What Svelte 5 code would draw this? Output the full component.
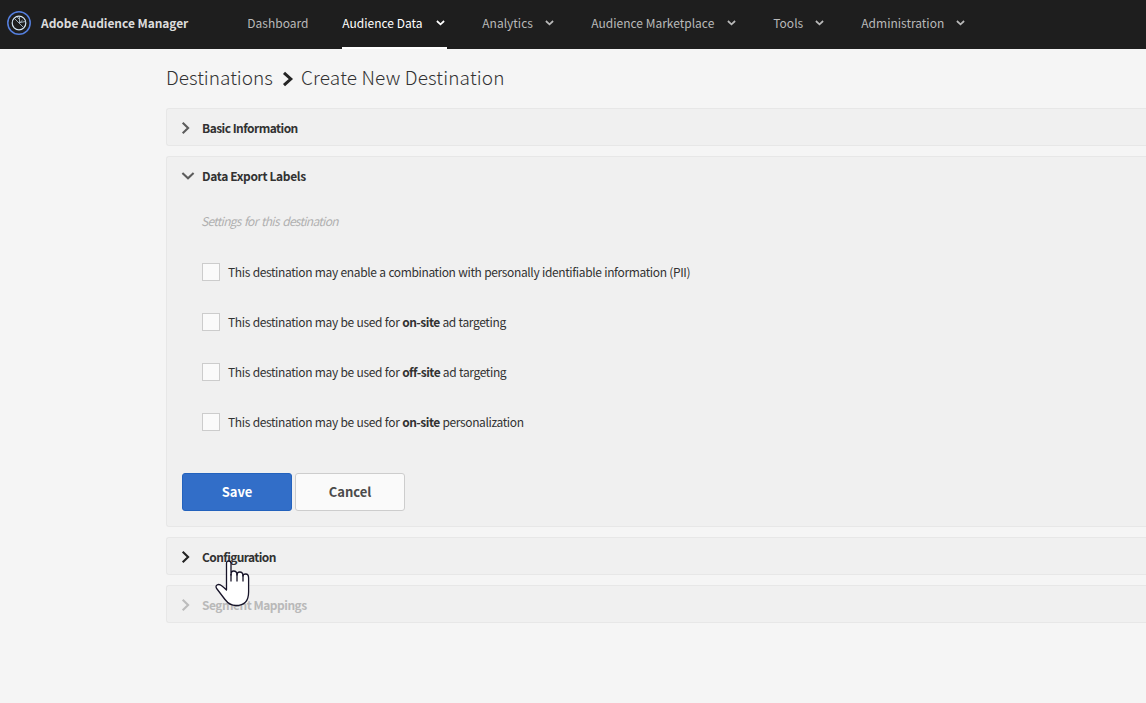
<script>
  const nav = [
    { label: 'Dashboard', width: 60, menu: false },
    { label: 'Audience Data', width: 81, menu: true, active: true },
    { label: 'Analytics', width: 50, menu: true },
    { label: 'Audience Marketplace', width: 123, menu: true },
    { label: 'Tools', width: 29, menu: true },
    { label: 'Administration', width: 82, menu: true }
  ];
  const options = [
    { before: 'This destination may enable a combination with personally identifiable information (PII)', bold: '', after: '' },
    { before: 'This destination may be used for ', bold: 'on-site', after: ' ad targeting' },
    { before: 'This destination may be used for ', bold: 'off-site', after: ' ad targeting' },
    { before: 'This destination may be used for ', bold: 'on-site', after: ' personalization' }
  ];
</script>

{#snippet chevron()}
  <svg class="chevron" width="10" height="14" viewBox="0 0 10 14"><path d="M1.7 1.7 7.1 7 1.7 12.3" /></svg>
{/snippet}

<div class="page">
  <header>
    <svg class="logo" width="24" height="24" viewBox="0 0 24 24" fill="none">
      <circle cx="12" cy="12" r="11.2" stroke="#5580e0" stroke-width="1.5" />
      <circle cx="12" cy="12" r="6.8" stroke="#d5e7f5" stroke-width="1.2" />
      <path d="M7.3 7.3 16.5 16.5M12.5 12V5.5M12.5 12 15.5 9.2M13 11.5 18.5 10.5M10 5.5 12 8" stroke="#bdcfdd" stroke-width=".8" />
    </svg>
    <span class="brand">Adobe Audience Manager</span>
    <nav>
      {#each nav as item}
        <a class:active={item.active} class:menu={item.menu}>
          <span class="label" style:width="{item.width}px">{item.label}</span>
          {#if item.menu}
            <svg width="9" height="6" viewBox="0 0 9 6"><path d="M.9 1 4.5 4.3 8.1 1" /></svg>
          {/if}
        </a>
      {/each}
    </nav>
  </header>

  <main>
    <h1>
      <span class="crumb">Destinations</span>
      <svg width="12" height="16" viewBox="0 0 12 16"><path d="M2 1.8 8.8 8 2 14.2" /></svg>
      <span class="current">Create New Destination</span>
    </h1>

    <section>
      <h2>{@render chevron()}<span class="basic">Basic Information</span></h2>
    </section>

    <section class="open">
      <h2>
        <svg class="chevron down" width="14" height="10" viewBox="0 0 14 10"><path d="M1.4 2 7 7.2 12.6 2" /></svg>
        <span class="labels">Data Export Labels</span>
      </h2>
      <p class="hint">Settings for this destination</p>
      <div class="options">
        {#each options as o}
          <label><i></i><span>{o.before}{#if o.bold}<b>{o.bold}</b>{/if}{o.after}</span></label>
        {/each}
      </div>
      <div class="buttons">
        <button class="primary">Save</button>
        <button>Cancel</button>
      </div>
    </section>

    <section class="hovered">
      <h2>{@render chevron()}<span class="config">Configuration</span></h2>
      <svg class="pointer" width="36" height="48" viewBox="0 0 36 48">
        <path d="M11.5 30V3.5Q11.5 1 13.7 1 16 1 16 3.5V15Q16 11 18.6 11 22 11 22 15 22 12 24.8 12 28 12 28 16 28 14 30.8 14 33.6 14 33.6 18V32Q33.6 45.5 21 45.5 14.5 45.5 10 39.5L2 29Q0 26.5 2 25 4.3 23.7 7 26Q9.5 28 11.5 30Z" fill="#fff" stroke="#171429" stroke-width="1.3" stroke-linejoin="round" />
        <path d="M16 14V21.5M22 14V21.5M28 15V21.5" fill="none" stroke="#171429" stroke-width="1.3" />
      </svg>
    </section>

    <section class="disabled">
      <h2>{@render chevron()}<span class="mappings">Segment Mappings</span></h2>
    </section>
  </main>
</div>

<style>
  :global(body) { background: #f5f5f5; overflow: hidden; }
  .page {
    height: 703px;
    overflow: hidden;
    background: #f5f5f5;
    color: #323232;
    font: 12px/20px "Noto Sans CJK SC", "Noto Sans", sans-serif;
  }
  header {
    display: flex;
    align-items: center;
    height: 49px;
    box-sizing: border-box;
    padding-left: 7px;
    background: #1e1e1e;
    color: #b9b9b9;
  }
  .logo { margin: 0 10px 3px 0; }
  .brand { width: 147px; margin: 0 59.3px 3px 0; color: #dcdcdc; font-weight: 700; letter-spacing: -.06px; white-space: nowrap; }
  nav { display: flex; gap: 35px; height: 49px; }
  a { display: flex; align-items: center; box-sizing: border-box; padding-bottom: 3px; }
  a.menu { padding-right: 2px; }
  a.active { color: #fff; border-bottom: 2px solid #fff; padding-bottom: 1px; }
  .label { white-space: nowrap; }
  a svg { margin-left: 13px; fill: none; stroke: currentColor; stroke-width: 1.7; }
  main { padding-left: 166px; }
  h1 {
    display: flex;
    align-items: center;
    height: 59px;
    margin: 0;
    font-size: 19px;
    font-weight: 300;
    white-space: nowrap;
  }
  h1 span { padding-bottom: 3px; }
  h1 svg { flex: none; margin: 0 7px 0 10px; fill: none; stroke: #252525; stroke-width: 3; }
  .crumb { width: 106px; }
  .current { letter-spacing: .15px; }
  section {
    position: relative;
    height: 38px;
    box-sizing: border-box;
    margin-bottom: 10px;
    border: 1px solid #e7e7e7;
    border-right: 0;
    border-radius: 3px 0 0 3px;
    background: #f0f0f0;
  }
  section.open { height: 371px; }
  h2 {
    display: flex;
    align-items: center;
    height: 38px;
    margin: 0 0 0 14px;
    font-size: 12px;
    font-weight: 700;
    white-space: nowrap;
  }
  .basic { letter-spacing: -.54px; }
  .labels { letter-spacing: -.36px; }
  .config { letter-spacing: -.6px; }
  .mappings { letter-spacing: -.5px; }
  .chevron { margin-right: 11px; fill: none; stroke: #5c5c5c; stroke-width: 2.1; }
  .chevron.down { margin-right: 7px; }
  .hovered .chevron { stroke: #222; }
  .disabled { color: #b9b9b9; }
  .disabled .chevron { stroke: #bcbcbc; }
  .hint { margin: 16px 0 0 34px; color: #b0b0b0; font-style: italic; letter-spacing: -.72px; word-spacing: 1.4px; }
  .options { display: grid; gap: 30px; margin: 31px 0 0 35px; letter-spacing: -.37px; word-spacing: .4px; }
  .options b { letter-spacing: -.5px; }
  label { display: flex; align-items: center; height: 20px; gap: 8px; white-space: nowrap; }
  i { width: 16px; height: 16px; border: 1px solid #ccc; background: #fafafa; }
  .buttons { display: flex; gap: 3px; margin: 41px 0 0 15px; }
  button {
    width: 110px;
    height: 38px;
    padding: 0 0 1px;
    border: 1px solid #cdcdcd;
    border-radius: 3px;
    background: #fafafa;
    color: #4b4b4b;
    font: 700 13px/34px "Noto Sans CJK SC", "Noto Sans", sans-serif;
  }
  .primary { border-color: #2362bd; background: #326ec8; color: #fff; }
  .pointer { position: absolute; z-index: 2; left: 48px; top: 22px; }
</style>
